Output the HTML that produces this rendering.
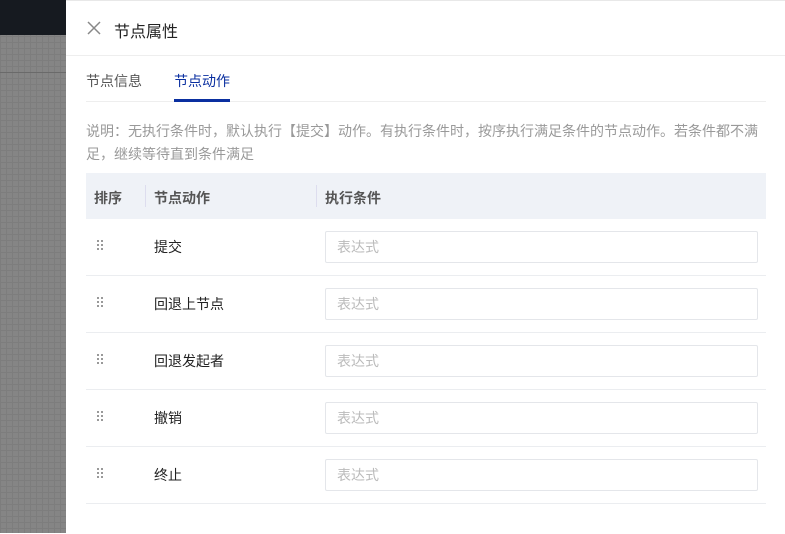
<!DOCTYPE html><html><head><meta charset="utf-8"><style>
body{margin:0;width:785px;height:533px;overflow:hidden;position:relative;font-family:"Liberation Sans","Noto Sans CJK SC",sans-serif;background:#fff}
.left{position:absolute;left:0;top:0;width:66px;height:533px;background:#858585;background-image:linear-gradient(#7d7d7d 1px,transparent 1px),linear-gradient(90deg,#7d7d7d 1px,transparent 1px);background-size:6px 6px}
.dark{position:absolute;left:0;top:0;width:66px;height:35px;background:#161a20}
.ln{position:absolute;left:0;top:72px;width:66px;height:1px;background:#6a6a6a}
.panel{position:absolute;left:66px;top:0;width:719px;height:533px;background:#fff;border-top:1px solid #e8e8e8}
.t{position:absolute;white-space:nowrap}
.row{position:absolute;left:86px;width:680px;height:57px;border-bottom:1px solid #ebedf0}
.dots{position:absolute;left:11px;top:22px;width:8px;height:12px}
.dots i{position:absolute;width:2px;height:2px;background:#999}
.inp{position:absolute;left:239px;top:13px;width:420px;height:30px;border:1px solid #e4e6ea;border-radius:2px;font-size:14px;color:#bbb;line-height:30px;padding-left:11px}
</style></head><body>
<div class="left"></div><div class="dark"></div><div class="ln"></div>
<div class="panel">
<svg style="position:absolute;left:21px;top:20px" width="14" height="14"><path d="M1 1L13 13M13 1L1 13" stroke="#888" stroke-width="1.5"/></svg>
<div class="t" style="left:48px;top:17px;font-size:16px;color:#222">节点属性</div>
<div style="position:absolute;left:0;top:54px;width:719px;height:1px;background:#eee"></div>
<div class="t" style="left:20px;top:70px;font-size:14px;color:#555">节点信息</div>
<div class="t" style="left:108px;top:70px;font-size:14px;color:#0a2fa0">节点动作</div>
<div style="position:absolute;left:20px;top:100px;width:680px;height:1px;background:#eee"></div>
<div style="position:absolute;left:108px;top:98px;width:56px;height:3px;background:#0a2fa0"></div>
<div class="t" style="left:20px;top:119px;font-size:14px;color:#999;line-height:23px;white-space:normal;width:680px">说明：无执行条件时，默认执行【提交】动作。有执行条件时，按序执行满足条件的节点动作。若条件都不满足，继续等待直到条件满足</div>
<div style="position:absolute;left:20px;top:172px;width:680px;height:46px;background:#eff2f7;font-size:14px;font-weight:bold;color:#555">
<div class="t" style="left:8px;top:15px">排序</div><div style="position:absolute;left:59px;top:12px;width:1px;height:22px;background:#dde"></div>
<div class="t" style="left:68px;top:15px">节点动作</div><div style="position:absolute;left:230px;top:12px;width:1px;height:22px;background:#dde"></div>
<div class="t" style="left:239px;top:15px">执行条件</div></div>
</div>
<div class="row" style="top:218px"><div class="dots"><i style="left:0;top:0"></i><i style="left:4px;top:0"></i><i style="left:0;top:4px"></i><i style="left:4px;top:4px"></i><i style="left:0;top:8px"></i><i style="left:4px;top:8px"></i></div><div class="t" style="left:68px;top:19px;font-size:14px;color:#222">提交</div><div class="inp">表达式</div></div>
<div class="row" style="top:275px"><div class="dots"><i style="left:0;top:0"></i><i style="left:4px;top:0"></i><i style="left:0;top:4px"></i><i style="left:4px;top:4px"></i><i style="left:0;top:8px"></i><i style="left:4px;top:8px"></i></div><div class="t" style="left:68px;top:19px;font-size:14px;color:#222">回退上节点</div><div class="inp">表达式</div></div>
<div class="row" style="top:332px"><div class="dots"><i style="left:0;top:0"></i><i style="left:4px;top:0"></i><i style="left:0;top:4px"></i><i style="left:4px;top:4px"></i><i style="left:0;top:8px"></i><i style="left:4px;top:8px"></i></div><div class="t" style="left:68px;top:19px;font-size:14px;color:#222">回退发起者</div><div class="inp">表达式</div></div>
<div class="row" style="top:389px"><div class="dots"><i style="left:0;top:0"></i><i style="left:4px;top:0"></i><i style="left:0;top:4px"></i><i style="left:4px;top:4px"></i><i style="left:0;top:8px"></i><i style="left:4px;top:8px"></i></div><div class="t" style="left:68px;top:19px;font-size:14px;color:#222">撤销</div><div class="inp">表达式</div></div>
<div class="row" style="top:446px"><div class="dots"><i style="left:0;top:0"></i><i style="left:4px;top:0"></i><i style="left:0;top:4px"></i><i style="left:4px;top:4px"></i><i style="left:0;top:8px"></i><i style="left:4px;top:8px"></i></div><div class="t" style="left:68px;top:19px;font-size:14px;color:#222">终止</div><div class="inp">表达式</div></div>
</body></html>
